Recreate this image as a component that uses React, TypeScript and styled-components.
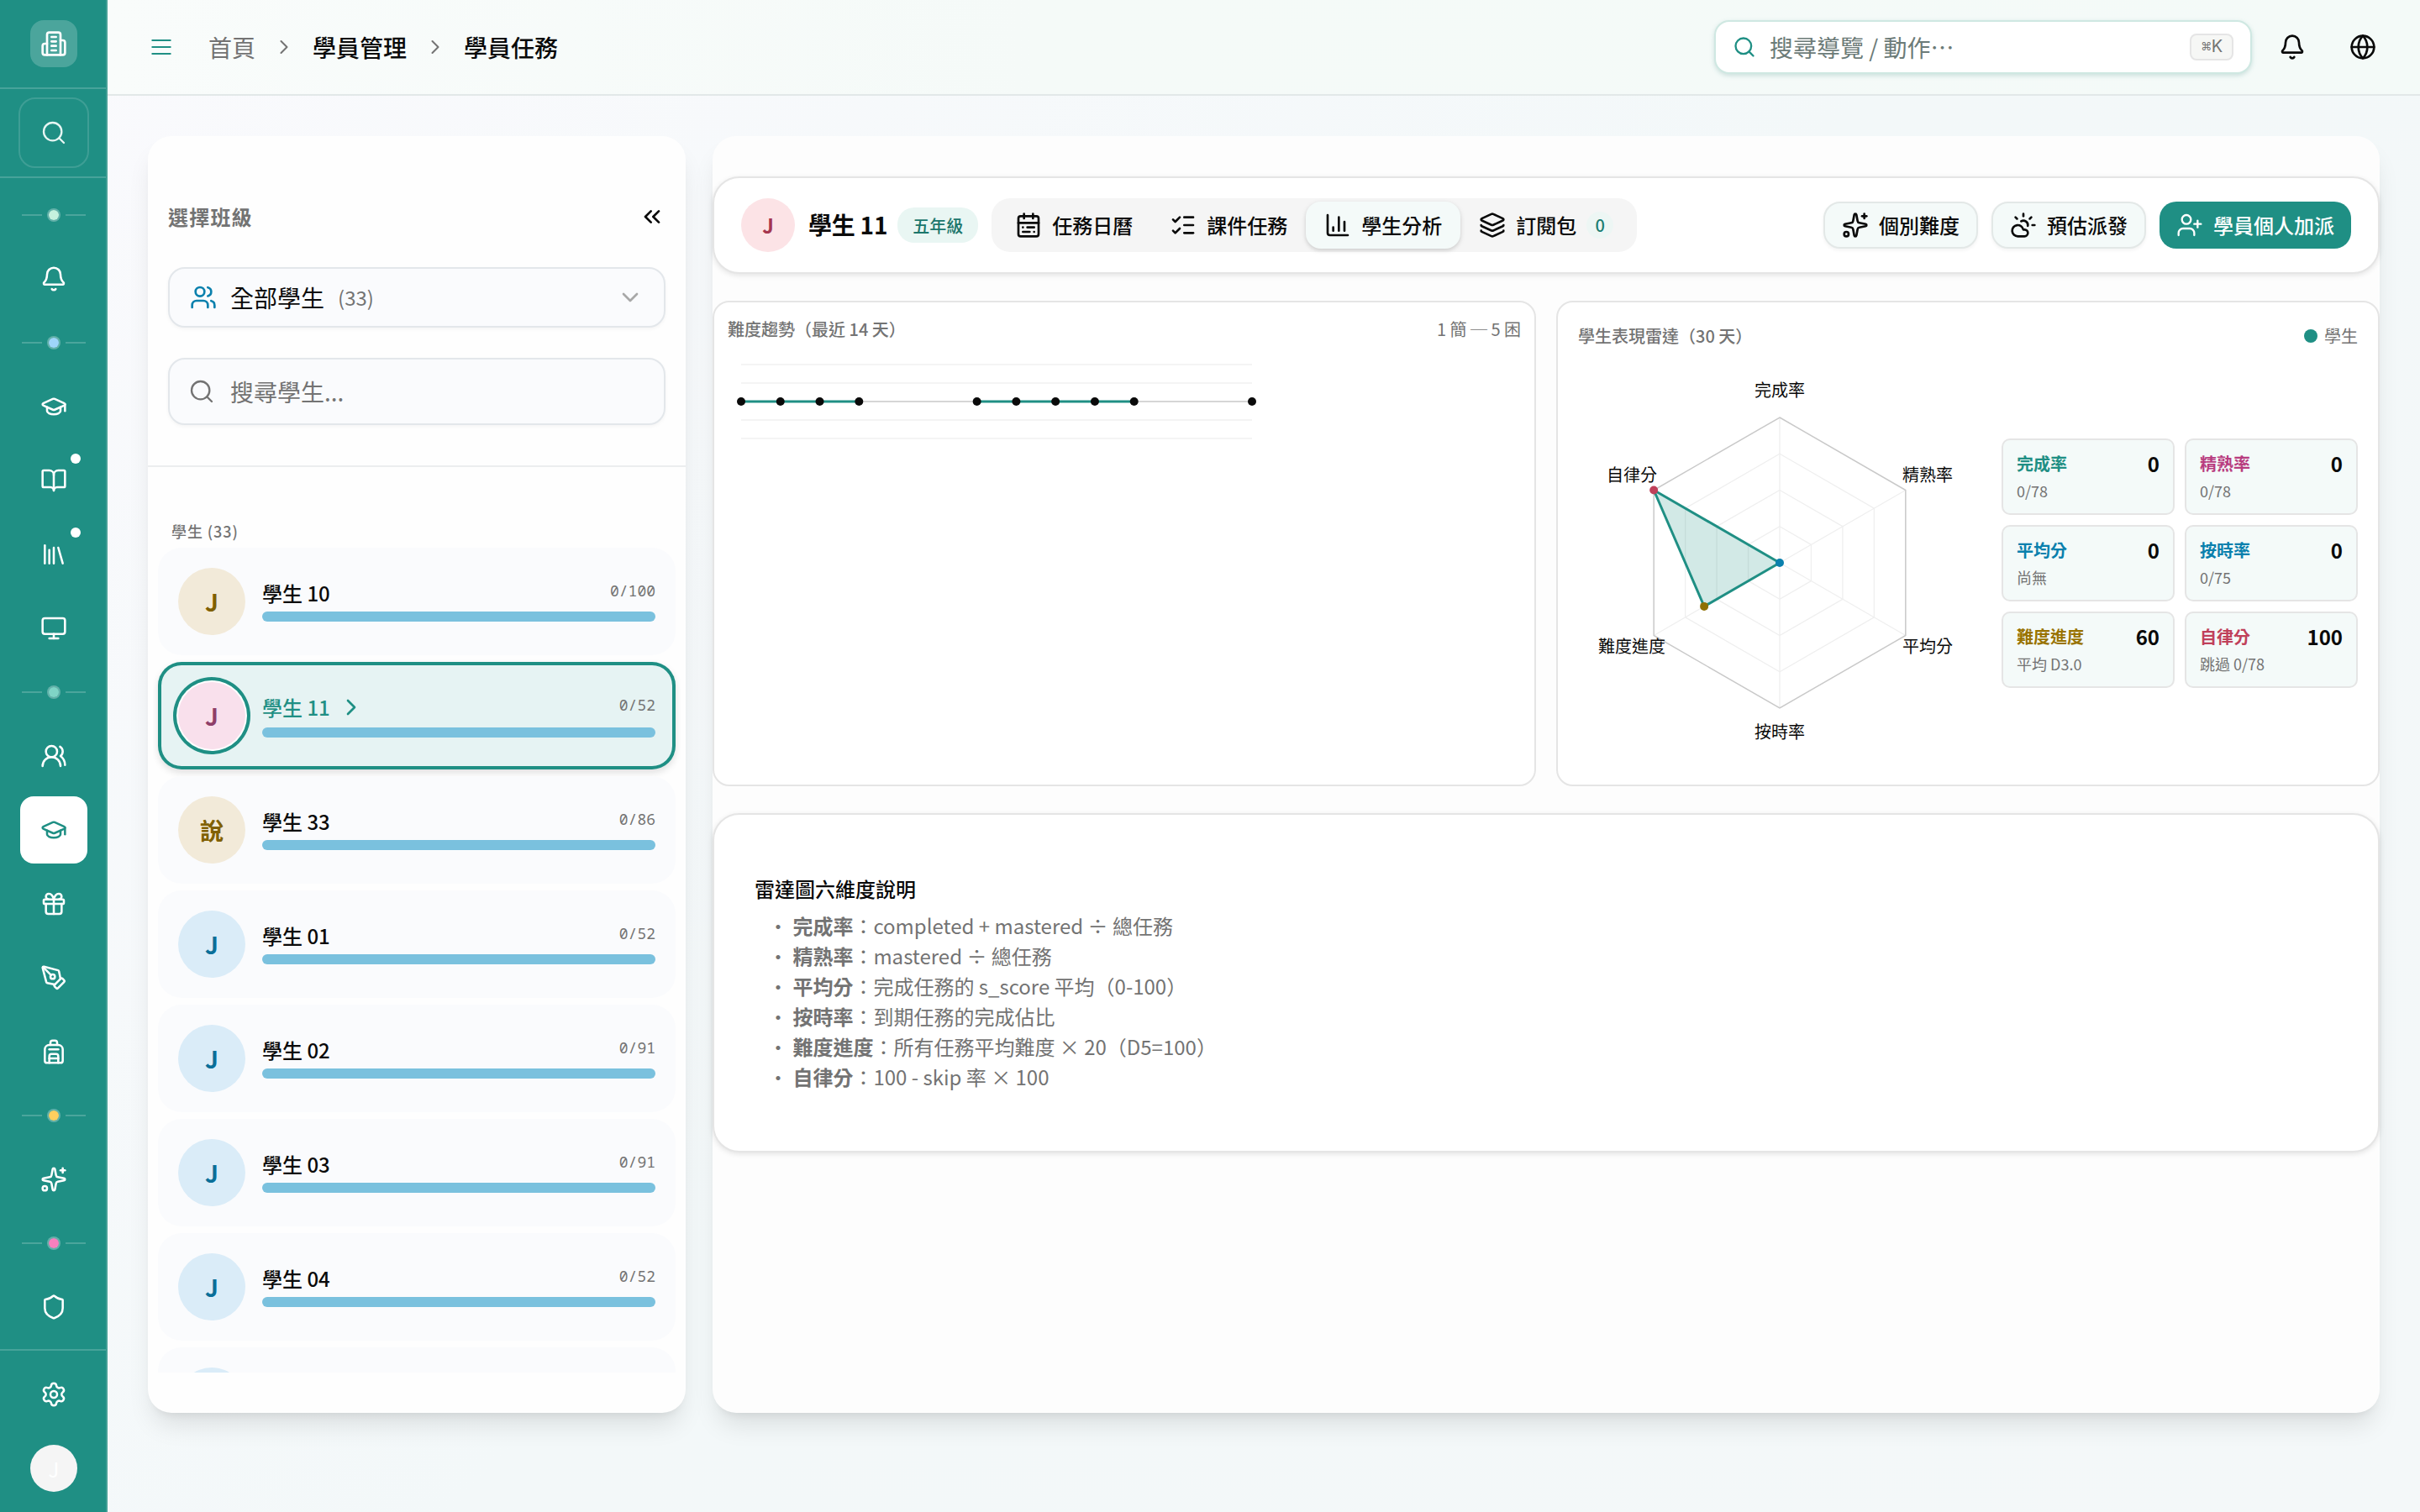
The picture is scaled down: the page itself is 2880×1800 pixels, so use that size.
import React from 'react';
import styled, { createGlobalStyle, css } from 'styled-components';
import {
  Backpack,
  Bell,
  BookOpen,
  CalendarRange,
  ChartColumn,
  ChevronDown,
  ChevronRight,
  ChevronsLeft,
  CloudSun,
  Gift,
  Globe,
  GraduationCap,
  Layers,
  Library,
  ListChecks,
  Monitor,
  PenTool,
  Search,
  Settings,
  Shield,
  Sparkles,
  UserPlus,
  Users,
  UsersRound,
} from 'lucide-react';

const teal = '#1f8f84';
const ink = '#0a0a0a';
const muted = '#737373';
const line = '#e5e5e5';

const GlobalStyle = createGlobalStyle`
  *, *::before, *::after { box-sizing: border-box; }
  body {
    margin: 0;
    font-family: "Noto Sans CJK TC", "Noto Sans", sans-serif;
    color: ${ink};
  }
  svg { display: block; flex-shrink: 0; }
`;

const Shell = styled.div`
  display: flex;
  width: 2880px;
  height: 1800px;
  overflow: hidden;
  background: linear-gradient(135deg, #fafafd 0%, #f3f8f9 50%, #f4f8f9 100%);
`;

/* ---------- Sidebar ---------- */

const Sidebar = styled.aside`
  flex: 0 0 128px;
  display: flex;
  flex-direction: column;
  background: ${teal};
  box-shadow: inset -2px 0 0 #45a096;
  color: #fff;
`;

const RailSection = styled.div<{ $h: number }>`
  height: ${(p) => p.$h}px;
  margin-right: 2px;
  padding-left: 2px;
  display: flex;
  align-items: center;
  justify-content: center;
  border-bottom: 2px solid rgba(255, 255, 255, 0.18);
`;

const Logo = styled.div`
  width: 56px;
  height: 56px;
  border-radius: 16px;
  background: rgba(255, 255, 255, 0.2);
  display: grid;
  place-items: center;
`;

const RailSearch = styled.button`
  width: 84px;
  height: 84px;
  padding: 0;
  border: 2px solid rgba(255, 255, 255, 0.14);
  border-radius: 20px;
  background: transparent;
  color: #e6f6f3;
  display: grid;
  place-items: center;
`;

const RailNav = styled.nav`
  flex: 1;
  padding-top: 8px;
  display: flex;
  flex-direction: column;
  align-items: center;
`;

const RailGroup = styled.div`
  display: flex;
  flex-direction: column;
  gap: 8px;
`;

const RailItem = styled.a<{ $active?: boolean }>`
  position: relative;
  width: 80px;
  height: 80px;
  border-radius: 16px;
  display: grid;
  place-items: center;
  color: ${(p) => (p.$active ? teal : '#fff')};
  background: ${(p) => (p.$active ? '#fff' : 'transparent')};
`;

const Pip = styled.span`
  position: absolute;
  top: 8px;
  right: 8px;
  width: 12px;
  height: 12px;
  border-radius: 50%;
  background: #fff;
`;

const RailDivider = styled.div<{ $color: string }>`
  height: 72px;
  display: flex;
  align-items: center;
  gap: 6px;

  &::before,
  &::after {
    content: '';
    width: 24px;
    height: 2px;
    background: rgba(255, 255, 255, 0.2);
  }
  i {
    width: 16px;
    height: 16px;
    border-radius: 50%;
    border: 2px solid rgba(255, 255, 255, 0.3);
    background: ${(p) => p.$color};
    background-clip: padding-box;
  }
`;

const RailFooter = styled.div`
  height: 194px;
  margin-right: 2px;
  padding: 12px 0 24px 2px;
  border-top: 2px solid rgba(255, 255, 255, 0.18);
  display: flex;
  flex-direction: column;
  align-items: center;
  justify-content: space-between;
`;

const RailAvatar = styled.div`
  width: 56px;
  height: 56px;
  border-radius: 50%;
  background: #f5f5f5;
  color: #fff;
  font-size: 24px;
  display: grid;
  place-items: center;
`;

/* ---------- Top bar ---------- */

const Main = styled.div`
  flex: 1;
  min-width: 0;
  display: flex;
  flex-direction: column;
`;

const TopBar = styled.header`
  height: 114px;
  padding: 0 52px 0 48px;
  border-bottom: 2px solid #e2e8e8;
  background: linear-gradient(90deg, #f9fcfb 0%, #f5faf8 40%, #f4faf8 100%);
  display: flex;
  align-items: center;
  justify-content: space-between;
`;

const Crumbs = styled.div`
  display: flex;
  align-items: center;
  gap: 20px;
  font-size: 28px;
  line-height: 40px;
  font-weight: 500;
`;

const MenuButton = styled.span`
  display: flex;
  margin-right: 20px;
  color: ${teal};
`;

const CrumbLink = styled.span`
  color: ${muted};
  font-weight: 400;
`;

const TopActions = styled.div`
  display: flex;
  align-items: center;
  gap: 52px;
`;

const CommandBox = styled.div`
  width: 640px;
  height: 64px;
  padding: 0 20px;
  margin-right: -20px;
  border: 2px solid #cfe8e2;
  border-radius: 18px;
  background: #fff;
  box-shadow: 0 2px 6px rgba(31, 143, 132, 0.14), 0 2px 4px rgba(0, 0, 0, 0.05);
  display: flex;
  align-items: center;
  gap: 16px;
  color: ${teal};
`;

const CommandHint = styled.span`
  flex: 1;
  color: #6c7b78;
  font-size: 28px;
  line-height: 40px;
`;

const Kbd = styled.kbd`
  width: 52px;
  height: 32px;
  border: 2px solid ${line};
  border-radius: 8px;
  background: #f6f7f5;
  color: ${muted};
  font: 400 20px/26px Inter, "Noto Sans CJK TC", sans-serif;
  letter-spacing: -0.5px;
  padding-bottom: 2px;
  display: flex;
  align-items: center;
  justify-content: center;

  span {
    font-size: 13px;
  }
`;

const Workspace = styled.main`
  flex: 1;
  padding: 48px 48px 118px;
  display: flex;
  gap: 32px;
  min-height: 0;
`;

const panel = css`
  border-radius: 28px;
  box-shadow: 0 20px 30px -6px rgba(0, 0, 0, 0.1), 0 8px 12px -8px rgba(0, 0, 0, 0.1);
`;

/* ---------- Roster ---------- */

const Roster = styled.section`
  ${panel}
  background: #fefefe;
  flex: 0 0 640px;
  display: flex;
  flex-direction: column;
  padding-bottom: 48px;
  min-height: 0;
`;

const RosterHead = styled.div`
  height: 394px;
  padding: 72px 24px 0;
  border-bottom: 2px solid #eceeef;
  display: flex;
  flex-direction: column;
  gap: 36px;
`;

const RosterTitle = styled.div`
  height: 48px;
  display: flex;
  align-items: center;
  justify-content: space-between;
  font-size: 24px;
  font-weight: 600;
  letter-spacing: 1.2px;

  span {
    padding-bottom: 2px;
    color: ${muted};
  }
`;

const Field = styled.div<{ $h: number }>`
  height: ${(p) => p.$h}px;
  padding: 0 24px;
  border: 2px solid #e3e7eb;
  border-radius: 20px;
  background: #fafbfd;
  box-shadow: 0 2px 4px rgba(0, 0, 0, 0.04);
  display: flex;
  align-items: center;
  gap: 16px;
  font-size: 28px;
  line-height: 40px;
`;

const SearchGlyph = styled.span`
  margin: 0 2px 0 -2px;
  color: ${muted};
`;

const FieldValue = styled.span`
  font-weight: 400;
`;

const FieldCount = styled.span`
  flex: 1;
  color: ${muted};
  font-size: 24px;
`;

const Placeholder = styled.span`
  color: ${muted};
`;

const RosterLabel = styled.div`
  height: 96px;
  padding: 62px 28px 0;
  font-size: 18px;
  line-height: 28px;
  font-weight: 500;
  letter-spacing: 0.9px;
  color: ${muted};
`;

const RosterList = styled.div`
  flex: 1;
  min-height: 0;
  overflow: hidden;
  margin: 0 6px;
  padding: 0 6px;
  display: flex;
  flex-direction: column;
  gap: 8px;
`;

const StudentRow = styled.div<{ $active?: boolean }>`
  flex: 0 0 128px;
  padding: 0 24px;
  border-radius: 28px;
  background: ${(p) => (p.$active ? '#e6f3f3' : '#fafbfd')};
  box-shadow: ${(p) =>
    p.$active ? `inset 0 0 0 4px ${teal}, 0 4px 8px rgba(0, 0, 0, 0.12)` : 'none'};
  display: flex;
  align-items: center;
  gap: 20px;
`;

const tones = {
  sand: ['#f2ead9', '#806000'],
  pink: ['#f9e0ec', '#8f3f69'],
  sky: ['#daecf8', '#0a6f99'],
  rose: ['#fce3e6', '#a5364f'],
};
type Tone = keyof typeof tones;

const Avatar = styled.div<{ $tone: Tone; $size: number; $ring?: boolean }>`
  flex: 0 0 ${(p) => p.$size}px;
  height: ${(p) => p.$size}px;
  border-radius: 50%;
  background: ${(p) => tones[p.$tone][0]};
  color: ${(p) => tones[p.$tone][1]};
  font-size: ${(p) => (p.$size > 70 ? 28 : 24)}px;
  line-height: 1;
  font-weight: 600;
  display: grid;
  place-items: center;
  box-shadow: ${(p) => (p.$ring ? `0 0 0 2px #fff, 0 0 0 6px ${teal}` : 'none')};
`;

const StudentBody = styled.div`
  flex: 1;
  display: flex;
  flex-direction: column;
  gap: 4px;
`;

const StudentTop = styled.div<{ $active?: boolean }>`
  height: ${(p) => (p.$active ? 36 : 32)}px;
  display: flex;
  align-items: center;
  justify-content: space-between;
`;

const StudentName = styled.span<{ $active?: boolean }>`
  display: flex;
  align-items: center;
  gap: 9px;
  padding-bottom: 5px;
  font-size: 24px;
  line-height: 32px;
  font-weight: 500;
  color: ${(p) => (p.$active ? teal : ink)};
`;

const StudentCount = styled.span`
  padding-bottom: 10px;
  font: 400 18px/24px "Noto Sans Mono", "DejaVu Sans Mono", monospace;
  color: ${muted};
`;

const Progress = styled.div`
  height: 12px;
  border-radius: 6px;
  background: #7ac1de;
`;

/* ---------- Detail ---------- */

const Detail = styled.section`
  ${panel}
  background: #fdfdfd;
  flex: 1;
  min-width: 0;
  padding-top: 48px;
  display: flex;
  flex-direction: column;
  gap: 32px;
`;

const card = css`
  border: 2px solid ${line};
  background: #fff;
`;

const HeadCard = styled.div`
  ${card}
  height: 116px;
  padding: 0 32px;
  border-radius: 32px;
  box-shadow: 0 2px 6px rgba(0, 0, 0, 0.1);
  display: flex;
  align-items: center;
`;

const StudentTitle = styled.h1`
  margin: 0 12px 0 16px;
  padding-bottom: 3px;
  font-size: 28px;
  line-height: 40px;
  font-weight: 600;
  letter-spacing: -0.25px;
`;

const GradeBadge = styled.span`
  width: 96px;
  height: 42px;
  margin-right: 16px;
  border-radius: 20px;
  background: #e9f6f3;
  color: #1c766c;
  font-size: 20px;
  line-height: 44px;
  font-weight: 500;
  text-align: center;
`;

const Tabs = styled.div`
  height: 64px;
  padding: 4px 6px;
  border-radius: 22px;
  background: #f5f5f5;
  display: flex;
`;

const Tab = styled.div<{ $active?: boolean }>`
  padding: 0 22px;
  border-radius: 18px;
  background: ${(p) => (p.$active ? '#f4faf9' : 'transparent')};
  box-shadow: ${(p) =>
    p.$active ? '0 2px 6px rgba(0, 0, 0, 0.1), 0 2px 4px rgba(0, 0, 0, 0.08)' : 'none'};
  display: flex;
  align-items: center;
  gap: 12px;
  font-size: 24px;
  font-weight: 500;
  line-height: 36px;
`;

const TabCount = styled.span`
  width: 32px;
  height: 32px;
  border-radius: 16px;
  background: #edf6f4;
  color: #1c7d72;
  font-size: 20px;
  line-height: 32px;
  text-align: center;
`;

const Actions = styled.div`
  margin-left: auto;
  display: flex;
  gap: 16px;
`;

const ActionButton = styled.button<{ $primary?: boolean }>`
  height: 56px;
  padding: 0 20px;
  border: ${(p) => (p.$primary ? '0' : '2px solid #e3e8e7')};
  border-radius: 20px;
  background: ${(p) => (p.$primary ? teal : '#f4faf9')};
  color: ${(p) => (p.$primary ? '#fff' : ink)};
  box-shadow: ${(p) => (p.$primary ? 'none' : '0 2px 4px rgba(0, 0, 0, 0.05)')};
  font: 500 24px/36px "Noto Sans CJK TC", "Noto Sans", sans-serif;
  display: flex;
  align-items: center;
  gap: 12px;
`;

const Charts = styled.div`
  display: grid;
  grid-template-columns: 1fr 1fr;
  gap: 24px;
  height: 578px;
`;

const ChartCard = styled.div<{ $pad: number; $gap: number }>`
  ${card}
  border-radius: 20px;
  padding: ${(p) => p.$pad}px;
  display: flex;
  flex-direction: column;
  gap: ${(p) => p.$gap}px;
`;

const ChartHead = styled.div`
  display: flex;
  justify-content: space-between;
  font-size: 20px;
  line-height: 32px;
  color: ${muted};
`;

const ChartTitle = styled.span`
  font-weight: 500;
`;

const Legend = styled.span`
  display: flex;
  align-items: center;
  gap: 8px;

  &::before {
    content: '';
    width: 16px;
    height: 16px;
    border-radius: 50%;
    background: ${teal};
  }
`;

const RadarRow = styled.div`
  display: flex;
  align-items: center;
  gap: 24px;
`;

const Stats = styled.div`
  flex: 1;
  display: grid;
  grid-template-columns: 1fr 1fr;
  gap: 12px;
`;

const Stat = styled.div`
  height: 91px;
  padding: 12px 16px;
  border: 2px solid ${line};
  border-radius: 10px;
  background: #f4faf9;
`;

const StatTop = styled.div<{ $color: string }>`
  display: flex;
  justify-content: space-between;
  font-size: 20px;
  line-height: 32px;
  font-weight: 600;
  color: ${(p) => p.$color};

  b {
    font-size: 24px;
    font-weight: 600;
    color: ${ink};
  }
`;

const StatNote = styled.div`
  margin-top: 2px;
  font-size: 18px;
  line-height: 28px;
  color: ${muted};
`;

const NotesCard = styled.div`
  ${card}
  height: 404px;
  padding: 70px 48px 0;
  border-radius: 32px;
  box-shadow: 0 2px 6px rgba(0, 0, 0, 0.1);
  font-size: 24px;
  line-height: 36px;
`;

const NotesTitle = styled.div`
  font-weight: 500;
  margin-bottom: 8px;
`;

const NotesList = styled.ul`
  margin: 0;
  padding: 0 0 0 16px;
  list-style: none;
  color: ${muted};

  li::before {
    content: '・ ';
    white-space: pre;
  }
  strong {
    font-weight: 600;
  }
`;

const ChartLabel = styled.text`
  font-size: 20px;
  font-weight: 400;
  fill: ${ink};
`;

/* ---------- Data ---------- */

type Student = { name: string; count: string; tone: Tone; initial?: string; active?: boolean };

const students: Student[] = [
  { name: '學生 10', count: '0/100', tone: 'sand' },
  { name: '學生 11', count: '0/52', tone: 'pink', active: true },
  { name: '學生 33', count: '0/86', tone: 'sand', initial: '說' },
  { name: '學生 01', count: '0/52', tone: 'sky' },
  { name: '學生 02', count: '0/91', tone: 'sky' },
  { name: '學生 03', count: '0/91', tone: 'sky' },
  { name: '學生 04', count: '0/52', tone: 'sky' },
];

const stats = [
  { label: '完成率', value: 0, note: '0/78', color: '#1f8f84' },
  { label: '精熟率', value: 0, note: '0/78', color: '#b83c7f' },
  { label: '平均分', value: 0, note: '尚無', color: '#0a80ad' },
  { label: '按時率', value: 0, note: '0/75', color: '#0a80ad' },
  { label: '難度進度', value: 60, note: '平均 D3.0', color: '#997300' },
  { label: '自律分', value: 100, note: '跳過 0/78', color: '#c0405a' },
];

const notes: [string, string][] = [
  ['完成率', 'completed + mastered ÷ 總任務'],
  ['精熟率', 'mastered ÷ 總任務'],
  ['平均分', '完成任務的 s_score 平均（0-100）'],
  ['按時率', '到期任務的完成佔比'],
  ['難度進度', '所有任務平均難度 × 20（D5=100）'],
  ['自律分', '100 - skip 率 × 100'],
];

const rail: { divider: string; items: { icon: React.ElementType; pip?: boolean; active?: boolean }[] }[] = [
  { divider: '#c6f1de', items: [{ icon: Bell }] },
  {
    divider: '#9fd5fa',
    items: [{ icon: GraduationCap }, { icon: BookOpen, pip: true }, { icon: Library, pip: true }, { icon: Monitor }],
  },
  {
    divider: '#7fd4c6',
    items: [
      { icon: UsersRound },
      { icon: GraduationCap, active: true },
      { icon: Gift },
      { icon: PenTool },
      { icon: Backpack },
    ],
  },
  { divider: '#ffcf5e', items: [{ icon: Sparkles }] },
  { divider: '#f780be', items: [{ icon: Shield }] },
];

/* ---------- Charts ---------- */

function TrendChart() {
  const x = (i: number) => 16 + (608 / 13) * i;
  const days = [0, 1, 2, 3, 6, 7, 8, 9, 10, 13];
  return (
    <svg width="640" height="120" viewBox="0 0 640 120">
      {[16, 38, 82, 104].map((y) => (
        <line key={y} x1="16" x2="624" y1={y} y2={y} stroke="#f4f4f4" strokeWidth="2" />
      ))}
      <line x1="16" x2="624" y1="60" y2="60" stroke="#d6d6d6" strokeWidth="2" />
      <path d={`M${x(0)} 60H${x(3)}M${x(6)} 60H${x(10)}`} stroke={teal} strokeWidth="3" />
      {days.map((d) => (
        <circle key={d} cx={x(d)} cy="60" r="5" fill={ink} />
      ))}
    </svg>
  );
}

function RadarChart() {
  const c = 240;
  const r = 173;
  const point = (i: number, k: number) => {
    const a = (Math.PI / 3) * i - Math.PI / 2;
    return [c + r * k * Math.cos(a), c + r * k * Math.sin(a)];
  };
  const ring = (k: number) => [0, 1, 2, 3, 4, 5].map((i) => point(i, k).join(',')).join(' ');
  const values = [0, 0, 0, 0, 0.6, 1];
  const shape = values.map((v, i) => point(i, v).join(',')).join(' ');
  const [dx, dy] = point(4, 0.6);
  const [sx, sy] = point(5, 1);
  return (
    <svg width="480" height="480" viewBox="0 0 480 480">
      {[0.25, 0.5, 0.75].map((k) => (
        <polygon key={k} points={ring(k)} fill="none" stroke="#efefef" strokeWidth="1.3" />
      ))}
      {[0, 1, 2, 3, 4, 5].map((i) => (
        <line key={i} x1={c} y1={c} x2={point(i, 1)[0]} y2={point(i, 1)[1]} stroke="#efefef" strokeWidth="1.3" />
      ))}
      <polygon points={ring(1)} fill="none" stroke="#c9c9c9" strokeWidth="1.5" />
      <polygon points={shape} fill={teal} fillOpacity="0.2" stroke={teal} strokeWidth="3" strokeLinejoin="round" />
      <circle cx={c} cy={c} r="5" fill="#0a80ad" />
      <circle cx={dx} cy={dy} r="5" fill="#8f7000" />
      <circle cx={sx} cy={sy} r="5" fill="#c0405a" />
      <ChartLabel x="240" y="42" textAnchor="middle">完成率</ChartLabel>
      <ChartLabel x="386" y="143">精熟率</ChartLabel>
      <ChartLabel x="386" y="347">平均分</ChartLabel>
      <ChartLabel x="240" y="449" textAnchor="middle">按時率</ChartLabel>
      <ChartLabel x="104" y="347" textAnchor="end">難度進度</ChartLabel>
      <ChartLabel x="94" y="143" textAnchor="end">自律分</ChartLabel>
    </svg>
  );
}

function MenuIcon() {
  return (
    <svg width="32" height="32" viewBox="0 0 24 24" fill="none" stroke="currentColor" strokeWidth="1.6" strokeLinecap="round">
      <path d="M4 6h16M4 12h16M4 18h16" />
    </svg>
  );
}

function CampusIcon() {
  return (
    <svg
      width="32"
      height="32"
      viewBox="0 0 24 24"
      fill="none"
      stroke="currentColor"
      strokeWidth="2"
      strokeLinecap="round"
      strokeLinejoin="round"
    >
      <path d="M6 22V4a2 2 0 0 1 2-2h8a2 2 0 0 1 2 2v18Z" />
      <path d="M6 12H4a2 2 0 0 0-2 2v6a2 2 0 0 0 2 2h2" />
      <path d="M18 9h2a2 2 0 0 1 2 2v9a2 2 0 0 1-2 2h-2" />
      <path d="M10 6h4M10 10h4M10 14h4M10 18h4" />
    </svg>
  );
}

/* ---------- Page ---------- */

export default function App() {
  return (
    <Shell>
      <GlobalStyle />
      <Sidebar>
        <RailSection $h={106}>
          <Logo>
            <CampusIcon />
          </Logo>
        </RailSection>
        <RailSection $h={106}>
          <RailSearch>
            <Search size={32} strokeWidth={1.75} />
          </RailSearch>
        </RailSection>
        <RailNav>
          {rail.map((group) => (
            <React.Fragment key={group.divider}>
              <RailDivider $color={group.divider}>
                <i />
              </RailDivider>
              <RailGroup>
                {group.items.map(({ icon: Icon, pip, active }, i) => (
                  <RailItem key={i} $active={active}>
                    <Icon size={32} strokeWidth={1.9} />
                    {pip && <Pip />}
                  </RailItem>
                ))}
              </RailGroup>
            </React.Fragment>
          ))}
        </RailNav>
        <RailFooter>
          <RailItem>
            <Settings size={32} strokeWidth={1.9} />
          </RailItem>
          <RailAvatar>J</RailAvatar>
        </RailFooter>
      </Sidebar>

      <Main>
        <TopBar>
          <Crumbs>
            <MenuButton>
              <MenuIcon />
            </MenuButton>
            <CrumbLink>首頁</CrumbLink>
            <ChevronRight size={28} color={muted} strokeWidth={1.75} />
            <span>學員管理</span>
            <ChevronRight size={28} color={muted} strokeWidth={1.75} />
            <span>學員任務</span>
          </Crumbs>
          <TopActions>
            <CommandBox>
              <Search size={28} />
              <CommandHint>搜尋導覽 / 動作…</CommandHint>
              <Kbd>
                <span>⌘</span>K
              </Kbd>
            </CommandBox>
            <Bell size={32} />
            <Globe size={32} />
          </TopActions>
        </TopBar>

        <Workspace>
          <Roster>
            <RosterHead>
              <RosterTitle>
                <span>選擇班級</span>
                <ChevronsLeft size={32} />
              </RosterTitle>
              <Field $h={72}>
                <Users size={32} color="#0a80ad" />
                <FieldValue>全部學生</FieldValue>
                <FieldCount>(33)</FieldCount>
                <ChevronDown size={32} color="#a8a8a8" />
              </Field>
              <Field $h={80}>
                <SearchGlyph>
                  <Search size={32} strokeWidth={1.75} />
                </SearchGlyph>
                <Placeholder>搜尋學生...</Placeholder>
              </Field>
            </RosterHead>
            <RosterLabel>學生 (33)</RosterLabel>
            <RosterList>
              {students.map((s) => (
                <StudentRow key={s.name} $active={s.active}>
                  <Avatar $tone={s.tone} $size={80} $ring={s.active}>
                    {s.initial ?? 'J'}
                  </Avatar>
                  <StudentBody>
                    <StudentTop $active={s.active}>
                      <StudentName $active={s.active}>
                        {s.name}
                        {s.active && <ChevronRight size={32} />}
                      </StudentName>
                      <StudentCount>{s.count}</StudentCount>
                    </StudentTop>
                    <Progress />
                  </StudentBody>
                </StudentRow>
              ))}
              <StudentRow>
                <Avatar $tone="sky" $size={80} />
              </StudentRow>
            </RosterList>
          </Roster>

          <Detail>
            <HeadCard>
              <Avatar $tone="rose" $size={64}>
                J
              </Avatar>
              <StudentTitle>學生 11</StudentTitle>
              <GradeBadge>五年級</GradeBadge>
              <Tabs>
                <Tab>
                  <CalendarRange size={32} />
                  任務日曆
                </Tab>
                <Tab>
                  <ListChecks size={32} />
                  課件任務
                </Tab>
                <Tab $active>
                  <ChartColumn size={32} />
                  學生分析
                </Tab>
                <Tab>
                  <Layers size={32} />
                  訂閱包
                  <TabCount>0</TabCount>
                </Tab>
              </Tabs>
              <Actions>
                <ActionButton>
                  <Sparkles size={32} />
                  個別難度
                </ActionButton>
                <ActionButton>
                  <CloudSun size={32} />
                  預估派發
                </ActionButton>
                <ActionButton $primary>
                  <UserPlus size={32} strokeWidth={1.75} />
                  學員個人加派
                </ActionButton>
              </Actions>
            </HeadCard>

            <Charts>
              <ChartCard $pad={16} $gap={10}>
                <ChartHead>
                  <ChartTitle>難度趨勢（最近 14 天）</ChartTitle>
                  <span>1 簡 ─ 5 困</span>
                </ChartHead>
                <TrendChart />
              </ChartCard>
              <ChartCard $pad={24} $gap={14}>
                <ChartHead>
                  <ChartTitle>學生表現雷達（30 天）</ChartTitle>
                  <Legend>學生</Legend>
                </ChartHead>
                <RadarRow>
                  <RadarChart />
                  <Stats>
                    {stats.map((s) => (
                      <Stat key={s.label}>
                        <StatTop $color={s.color}>
                          {s.label}
                          <b>{s.value}</b>
                        </StatTop>
                        <StatNote>{s.note}</StatNote>
                      </Stat>
                    ))}
                  </Stats>
                </RadarRow>
              </ChartCard>
            </Charts>

            <NotesCard>
              <NotesTitle>雷達圖六維度說明</NotesTitle>
              <NotesList>
                {notes.map(([name, text]) => (
                  <li key={name}>
                    <strong>{name}</strong>：{text}
                  </li>
                ))}
              </NotesList>
            </NotesCard>
          </Detail>
        </Workspace>
      </Main>
    </Shell>
  );
}
